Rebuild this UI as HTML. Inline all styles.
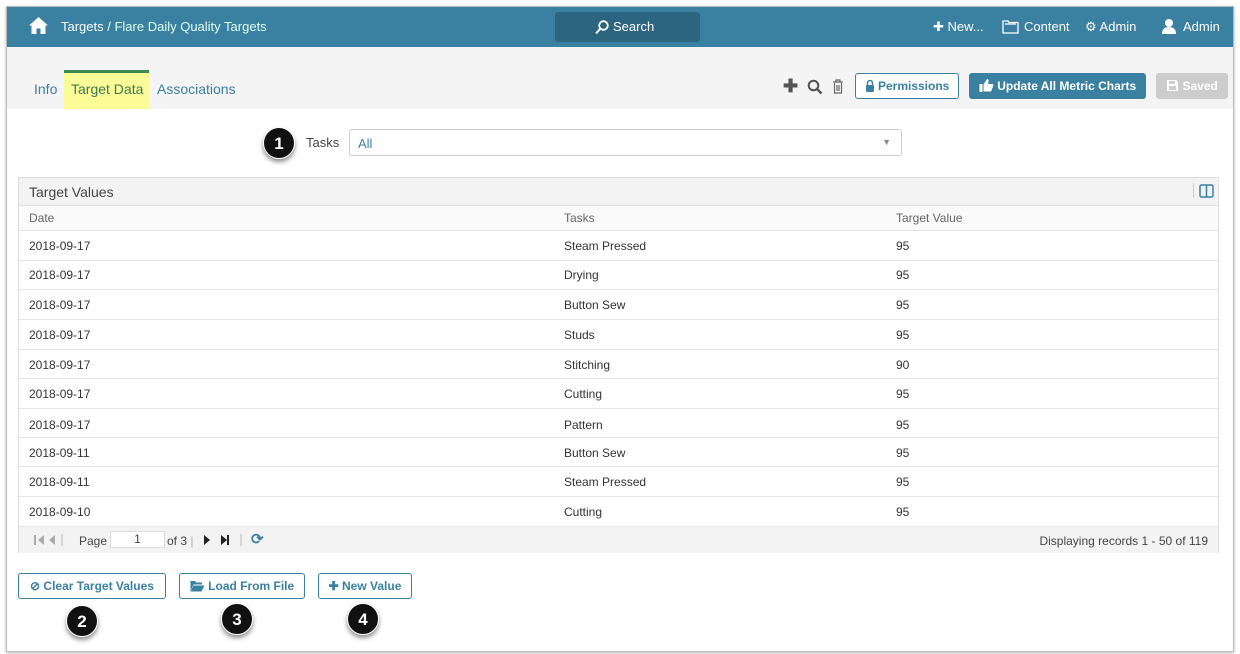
<!DOCTYPE html>
<html><head><style>
*{box-sizing:border-box;margin:0;padding:0}
body{width:1240px;height:654px;background:#fff;font-family:"Liberation Sans",sans-serif;position:relative;overflow:hidden;font-size:12px;color:#333}
.frame{position:absolute;left:6px;top:6px;width:1228px;height:646px;border:1px solid #bbb;box-shadow:0 1px 3px rgba(0,0,0,.3);overflow:hidden}
.top{position:absolute;left:0;top:0;width:100%;height:40px;background:#3a80a1;color:#fff;font-size:13px}
.top span{position:absolute;top:12px}
.search{position:absolute;left:548px;top:5px;width:145px;height:30px;background:#2b6580;border-radius:3px}
.sub{position:absolute;left:0;top:40px;width:100%;height:62px;background:#f4f4f4}
.tab{position:absolute;top:74px;font-size:14px;color:#3a80a1}
.btn{position:absolute;height:26px;border:1px solid #3a80a1;border-radius:3px;color:#3a80a1;font-weight:bold;font-size:12px;line-height:24px;text-align:center;background:#fff}
.btn svg{vertical-align:-2px}
.badge{position:absolute;width:32px;height:32px;border-radius:50%;background:#111;color:#fff;font-size:17px;font-weight:bold;text-align:center;line-height:32px;box-shadow:0 3px 5px rgba(0,0,0,.45);border:1.5px solid #fff}
.tbl{position:absolute;left:11px;top:170px;width:1201px;height:376px;border:1px solid #ddd}
.row{position:absolute;left:0;width:100%;border-bottom:1px solid #e6e6e6;font-size:12px}
.row span{position:absolute}
</style></head><body>
<div class="frame">
<div class="top">
<svg style="position:absolute;left:21px;top:9px" width="21" height="19" viewBox="0 0 21 19"><path d="M10.5 1 L20 9.5 L17.5 9.5 L17.5 18 L12.5 18 L12.5 12.5 L8.5 12.5 L8.5 18 L3.5 18 L3.5 9.5 L1 9.5 Z" fill="#fff"/></svg>
<span style="left:54px">Targets <span style="position:static;color:#dfe">/ Flare Daily Quality Targets</span></span>
<div class="search"><svg style="position:absolute;left:40px;top:8px" width="14" height="15"><circle cx="8.5" cy="5.5" r="4.3" stroke="#fff" stroke-width="1.8" fill="none"/><path d="M5.5 8.5 L1 13.5" stroke="#fff" stroke-width="2"/></svg><span style="left:58px;top:7px">Search</span></div>
<span style="left:926px">✚ New...</span>
<svg style="position:absolute;left:995px;top:12px" width="17" height="15"><path d="M1 2 H6 L7 3.5 H16 V14 H1 Z M3 5 H14" stroke="#fff" stroke-width="1.3" fill="none"/></svg>
<span style="left:1017px">Content</span>
<span style="left:1078px">⚙ Admin</span>
<svg style="position:absolute;left:1154px;top:11px" width="16" height="16"><circle cx="8" cy="5" r="4" fill="#fff"/><path d="M1 16 Q1 9 8 9 Q15 9 15 16 Z" fill="#fff"/></svg>
<span style="left:1176px">Admin</span>
</div>
<div class="sub"></div>
<div style="position:absolute;left:57px;top:63px;width:85px;height:39px;background:#fbfb98;border-top:3px solid #3d8a4f"></div>
<div class="tab" style="left:27px">Info</div>
<div class="tab" style="left:64px;color:#3d7a4f">Target Data</div>
<div class="tab" style="left:150px">Associations</div>
<div style="position:absolute;left:776px;top:69px;font-size:18px;font-weight:bold;color:#555">✚</div>
<svg style="position:absolute;left:800px;top:72px" width="16" height="16"><circle cx="6.5" cy="6.5" r="4.8" stroke="#555" stroke-width="2" fill="none"/><path d="M10 10 L14.5 14.5" stroke="#555" stroke-width="2.5"/></svg>
<svg style="position:absolute;left:825px;top:72px" width="12" height="15"><path d="M1 3 H11 M4 3 V1 H8 V3 M2.5 4 V14 H9.5 V4 M5 6 V12 M7 6 V12" stroke="#666" stroke-width="1.2" fill="none"/></svg>
<div class="btn" style="left:848px;top:66px;width:104px"><svg width="10" height="13"><path d="M2.5 6 V4 A2.5 2.5 0 0 1 7.5 4 V6" stroke="#3a80a1" stroke-width="1.5" fill="none"/><rect x="1" y="6" width="8" height="7" rx="1" fill="#3a80a1"/></svg> Permissions</div>
<div class="btn" style="left:962px;top:66px;width:177px;background:#3a80a1;color:#fff"><svg width="15" height="14"><rect x="0.5" y="6" width="3" height="8" fill="#fff"/><path d="M4.5 6.5 L8 1 Q10 1 9.5 4 L9 6 H13.5 Q15 6.5 14 8.5 L12 13.5 H4.5 Z" fill="#fff"/></svg> Update All Metric Charts</div>
<div class="btn" style="left:1149px;top:66px;width:72px;background:#ccc;border-color:#ccc;color:#fff"><svg width="13" height="13"><path d="M1 1 H10 L12 3 V12 H1 Z" fill="#fff"/><rect x="3" y="2" width="6" height="3" fill="#ccc"/><rect x="3" y="7" width="7" height="4" fill="#ccc"/></svg> Saved</div>
<div class="badge" style="left:256px;top:120px">1</div>
<div style="position:absolute;left:299px;top:128px;font-size:13px;color:#444">Tasks</div>
<div style="position:absolute;left:342px;top:122px;width:553px;height:27px;border:1px solid #ccc;border-radius:3px;color:#3a80a1;font-size:13px;padding:6px 8px">All<span style="position:absolute;right:10px;top:7px;color:#888;font-size:9px">▼</span></div>
<div class="tbl">
<div style="position:absolute;left:0;top:0;width:100%;height:28px;background:#f3f3f3;border-bottom:1px solid #ddd;font-size:14px;padding:6px 10px;color:#444">Target Values<svg style="position:absolute;right:4px;top:6px" width="15" height="14"><rect x="1" y="1" width="13" height="12" rx="1.5" stroke="#3a80a1" stroke-width="1.5" fill="none"/><path d="M7.5 1 V13" stroke="#3a80a1" stroke-width="1.5"/></svg><span style="position:absolute;right:24px;top:5px;height:15px;border-left:1px solid #ccc"></span></div>
<div class="row" style="top:28px;height:25px;background:#fafafa;color:#666"><span style="left:10px;top:5px">Date</span><span style="left:545px;top:5px">Tasks</span><span style="left:877px;top:5px">Target Value</span></div>
<div class="row" style="top:53px;height:30px"><span style="left:10px;top:8px">2018-09-17</span><span style="left:545px;top:8px">Steam Pressed</span><span style="left:877px;top:8px">95</span></div>
<div class="row" style="top:83px;height:29px"><span style="left:10px;top:7px">2018-09-17</span><span style="left:545px;top:7px">Drying</span><span style="left:877px;top:7px">95</span></div>
<div class="row" style="top:112px;height:30px"><span style="left:10px;top:8px">2018-09-17</span><span style="left:545px;top:8px">Button Sew</span><span style="left:877px;top:8px">95</span></div>
<div class="row" style="top:142px;height:30px"><span style="left:10px;top:8px">2018-09-17</span><span style="left:545px;top:8px">Studs</span><span style="left:877px;top:8px">95</span></div>
<div class="row" style="top:172px;height:29px"><span style="left:10px;top:8px">2018-09-17</span><span style="left:545px;top:8px">Stitching</span><span style="left:877px;top:8px">90</span></div>
<div class="row" style="top:201px;height:30px"><span style="left:10px;top:8px">2018-09-17</span><span style="left:545px;top:8px">Cutting</span><span style="left:877px;top:8px">95</span></div>
<div class="row" style="top:231px;height:29px"><span style="left:10px;top:9px">2018-09-17</span><span style="left:545px;top:9px">Pattern</span><span style="left:877px;top:9px">95</span></div>
<div class="row" style="top:260px;height:29px"><span style="left:10px;top:8px">2018-09-11</span><span style="left:545px;top:8px">Button Sew</span><span style="left:877px;top:8px">95</span></div>
<div class="row" style="top:289px;height:30px"><span style="left:10px;top:8px">2018-09-11</span><span style="left:545px;top:8px">Steam Pressed</span><span style="left:877px;top:8px">95</span></div>
<div class="row" style="top:319px;height:30px"><span style="left:10px;top:8px">2018-09-10</span><span style="left:545px;top:8px">Cutting</span><span style="left:877px;top:8px">95</span></div>
<div style="position:absolute;left:0;top:349px;width:100%;height:26px;background:#f3f3f3;font-size:12px;color:#444">
<svg style="position:absolute;left:14px;top:7px" width="50" height="12"><rect x="1" y="1" width="2" height="10" fill="#aaa"/><path d="M11 1 L5 6 L11 11 Z M22 1 L16 6 L22 11 Z" fill="#aaa"/><path d="M29 0 V12" stroke="#bbb"/></svg>
<span style="position:absolute;left:60px;top:7px">Page</span>
<span style="position:absolute;left:91px;top:4px;width:55px;height:17px;background:#fff;border:1px solid #ddd;text-align:center;line-height:15px">1</span>
<span style="position:absolute;left:148px;top:7px">of 3 <span style="color:#aaa">|</span></span>
<svg style="position:absolute;left:183px;top:7px" width="50" height="12"><path d="M2 1 L8 6 L2 11 Z M19 1 L25 6 L19 11 Z" fill="#222"/><rect x="25" y="1" width="2" height="10" fill="#222"/><path d="M39 0 V12" stroke="#bbb"/></svg>
<span style="position:absolute;left:232px;top:3px;color:#3a80a1;font-size:15px;font-weight:bold">⟳</span>
<span style="position:absolute;right:10px;top:7px">Displaying records 1 - 50 of 119</span>
</div>
</div>
<div class="btn" style="left:11px;top:566px;width:148px">⊘ Clear Target Values</div>
<div class="btn" style="left:172px;top:566px;width:126px"><svg width="15" height="12"><path d="M0.5 1 H5 L6 2.5 H12 V4.5 H3.5 L0.5 11 Z M3.5 5.5 H14.5 L11.5 11.5 H0.5 Z" fill="#3a80a1"/></svg> Load From File</div>
<div class="btn" style="left:311px;top:566px;width:94px">✚ New Value</div>
<div class="badge" style="left:59px;top:598px">2</div>
<div class="badge" style="left:214px;top:596px">3</div>
<div class="badge" style="left:340px;top:596px">4</div>
</div>
</body></html>
